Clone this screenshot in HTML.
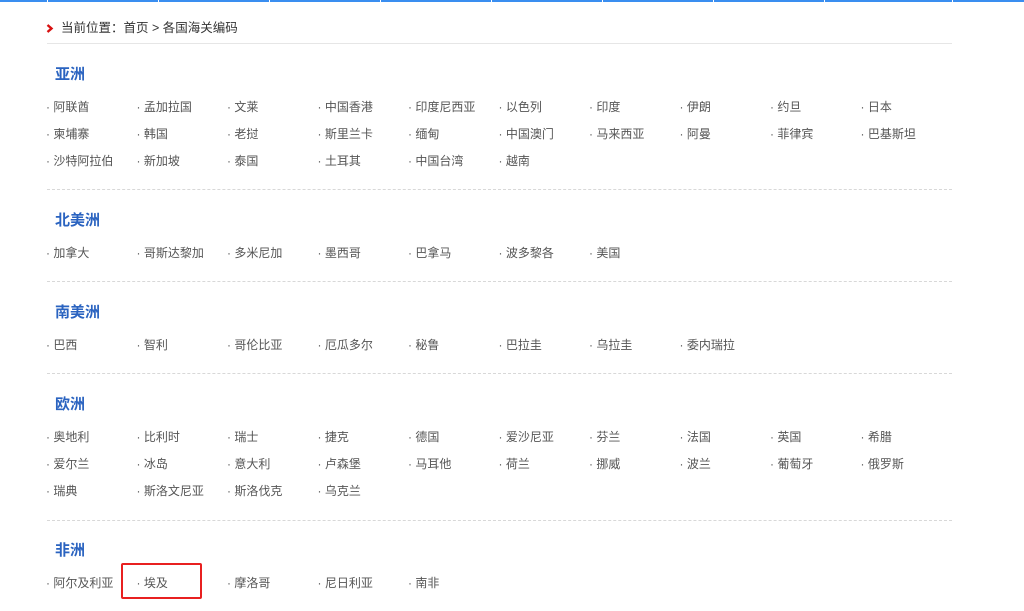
<!DOCTYPE html>
<html><head><meta charset="utf-8"><style>
*{margin:0;padding:0;box-sizing:border-box}
body{width:1024px;height:611px;background:#fff;font-family:"Liberation Sans","Noto Sans CJK SC",sans-serif;position:relative;overflow:hidden;color:#555}
.bar{position:absolute;top:0;height:2px;background:#3a8ef0}
.bc{position:absolute;left:61px;top:20px;font-size:12.5px;color:#333;line-height:16px}
.chev{position:absolute;left:46px;top:24px}
.hl{position:absolute;left:47px;width:905px;top:43px;border-top:1px solid #e6e6e6}
.dv{position:absolute;left:47px;width:905px;border-top:1px dashed #d8d8d8}
h3{position:absolute;left:55px;font-size:15px;color:#2a63c0;font-weight:bold;line-height:18px}
.it{position:absolute;font-size:12px;line-height:16px;color:#555;white-space:nowrap}
.box{position:absolute;left:121px;top:563px;width:81px;height:36px;border:2px solid #e82020;border-radius:2px}
</style></head><body>
<div class="bar" style="left:0;width:47px"></div>
<div class="bar" style="left:48px;width:110px"></div>
<div class="bar" style="left:159px;width:110px"></div>
<div class="bar" style="left:270px;width:110px"></div>
<div class="bar" style="left:381px;width:110px"></div>
<div class="bar" style="left:492px;width:110px"></div>
<div class="bar" style="left:603px;width:110px"></div>
<div class="bar" style="left:714px;width:110px"></div>
<div class="bar" style="left:825px;width:127px"></div>
<div class="bar" style="left:953px;width:71px"></div>
<svg class="chev" width="8" height="9" viewBox="0 0 8 9"><path d="M1.5 1 L5.5 4.5 L1.5 8" fill="none" stroke="#d81010" stroke-width="2.4"/></svg>
<div class="bc">当前位置：首页 &gt; 各国海关编码</div>
<div class="hl"></div>
<div id="c"></div>
<div class="box"></div>
<script>
var data=[[66,"亚洲",[["阿联酋","孟加拉国","文莱","中国香港","印度尼西亚","以色列","印度","伊朗","约旦","日本"],["柬埔寨","韩国","老挝","斯里兰卡","缅甸","中国澳门","马来西亚","阿曼","菲律宾","巴基斯坦"],["沙特阿拉伯","新加坡","泰国","土耳其","中国台湾","越南"]],189],
[212,"北美洲",[["加拿大","哥斯达黎加","多米尼加","墨西哥","巴拿马","波多黎各","美国"]],281],
[304,"南美洲",[["巴西","智利","哥伦比亚","厄瓜多尔","秘鲁","巴拉圭","乌拉圭","委内瑞拉"]],373],
[396,"欧洲",[["奥地利","比利时","瑞士","捷克","德国","爱沙尼亚","芬兰","法国","英国","希腊"],["爱尔兰","冰岛","意大利","卢森堡","马耳他","荷兰","挪威","波兰","葡萄牙","俄罗斯"],["瑞典","斯洛文尼亚","斯洛伐克","乌克兰"]],520],
[542,"非洲",[["阿尔及利亚","埃及","摩洛哥","尼日利亚","南非"]],0]];
var h="";
data.forEach(function(s){
h+='<h3 style="top:'+s[0]+'px">'+s[1]+'</h3>';
s[2].forEach(function(r,ri){r.forEach(function(t,ci){
h+='<div class="it" style="left:'+(46+ci*90.5)+'px;top:'+(s[0]+33+ri*27)+'px">· '+t+'</div>';});});
if(s[3])h+='<div class="dv" style="top:'+s[3]+'px"></div>';
});
document.getElementById("c").innerHTML=h;
</script>
</body></html>
